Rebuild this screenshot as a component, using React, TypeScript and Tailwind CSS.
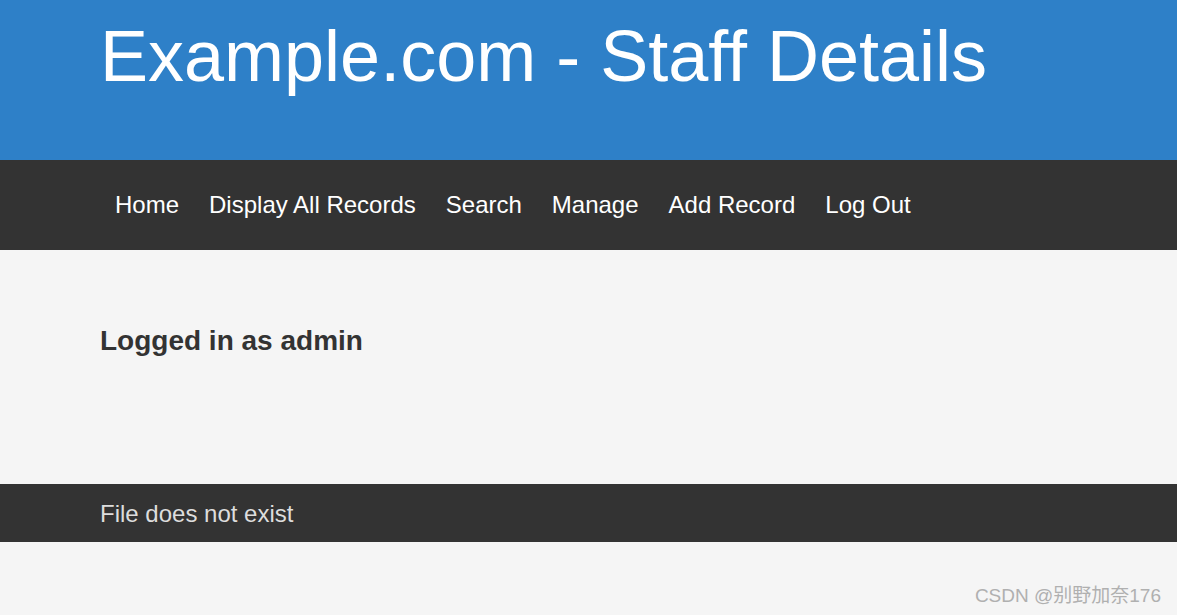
import React from 'react';

const navItems = ['Home', 'Display All Records', 'Search', 'Manage', 'Add Record', 'Log Out'];

const App: React.FC = () => {
  return (
    <div className="min-h-[615px] bg-[#f5f5f5] font-['Liberation_Sans',Arial,sans-serif] relative">
      <header className="h-[160px] bg-[#2e80c8] px-[100px]">
        <h1 className="text-[72px] leading-none text-white pt-[20px]">Example.com - Staff Details</h1>
      </header>

      <nav className="h-[90px] bg-[#333333] px-[100px] flex items-center">
        {navItems.map((item) => (
          <a key={item} href="#" className="px-[15px] text-[24px] text-white leading-none">
            {item}
          </a>
        ))}
      </nav>

      <main className="h-[234px] px-[100px] pt-[77px]">
        <h2 className="text-[28px] font-bold text-[#333333] leading-none">Logged in as admin</h2>
      </main>

      <footer className="h-[58px] bg-[#333333] px-[100px] flex items-center pt-[2px]">
        <p className="text-[24px] text-[#dddddd] leading-none">File does not exist</p>
      </footer>

      <div className="absolute right-[16px] bottom-[5px] text-[19px] text-[#b0b0b0] font-['Liberation_Sans','Noto_Sans_CJK_SC',sans-serif]">
        CSDN @别野加奈176
      </div>
    </div>
  );
};

export default App;
